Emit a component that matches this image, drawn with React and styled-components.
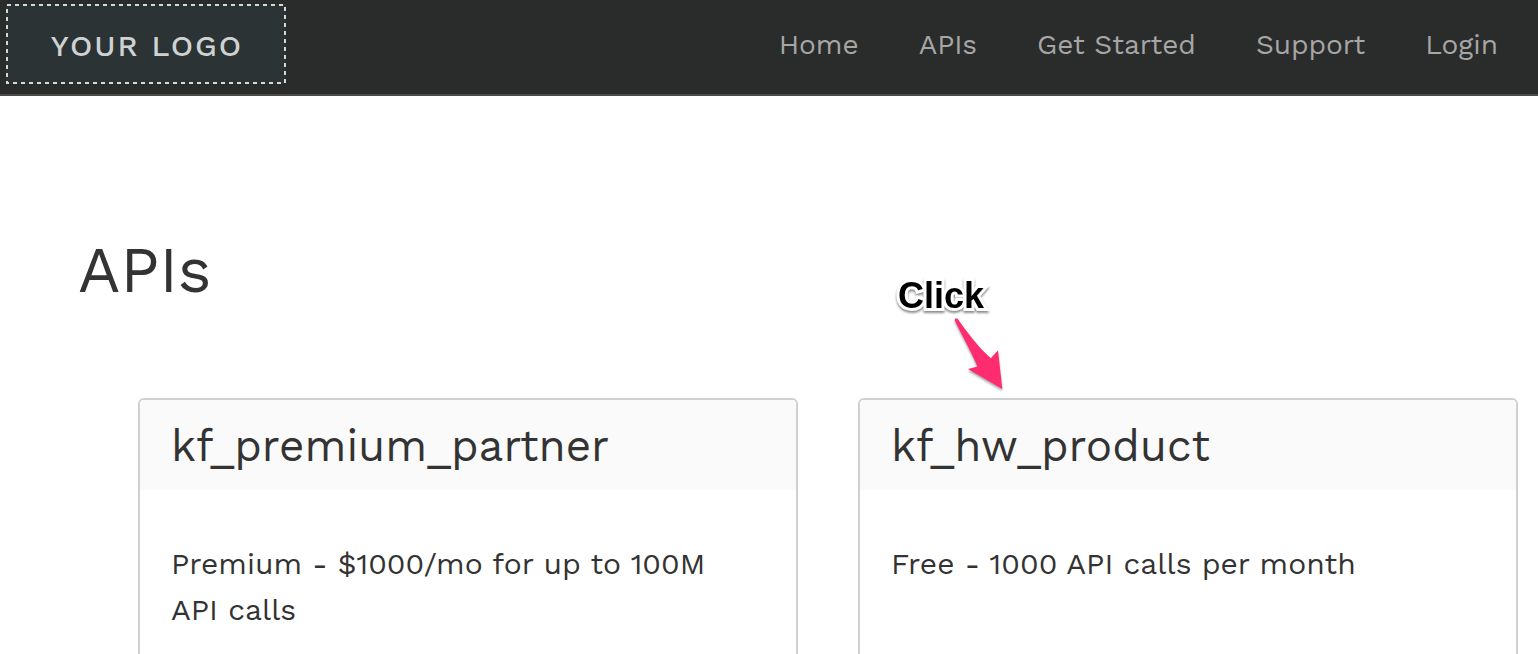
import React from "react";
import styled, { createGlobalStyle } from "styled-components";

const GlobalStyle = createGlobalStyle`
  *, *::before, *::after { box-sizing: border-box; }
  body {
    margin: 0;
    background: #fff;
    color: #333;
    font-family: "Work Sans", Inter, sans-serif;
    font-weight: 400;
    font-variant-numeric: lining-nums;
  }
  html { scrollbar-width: none; }
`;

const Header = styled.header`
  display: flex;
  justify-content: space-between;
  align-items: flex-start;
  padding: 4px 10px 10px 6px;
  background: #2a2c2b;
  border-bottom: 2px solid #4a4848;
`;

const Logo = styled.a`
  position: relative;
  display: flex;
  align-items: center;
  justify-content: center;
  width: 280px;
  height: 80px;
  flex: none;
  background: #2b3335;
  color: #cfd2d2;
  font-size: 30px;
  font-weight: 500;
  line-height: 32px;
  letter-spacing: 2px;
  padding-top: 4px;
  padding-left: 2px;
  text-decoration: none;
`;

const LogoFrame = styled.svg`
  position: absolute;
  inset: 0;
  width: 100%;
  height: 100%;
`;

const Nav = styled.nav`
  display: flex;
`;

const NavLink = styled.a`
  padding: 25px 30px 23px;
  color: #a6a6a6;
  font-size: 28px;
  line-height: 32px;
  text-decoration: none;
  white-space: nowrap;
`;

const Main = styled.main`
  padding: 136px 20px 0 78px;
`;

const PageTitle = styled.h1`
  margin: 0;
  font-size: 64px;
  line-height: 76px;
  font-weight: 400;
`;

const CardGrid = styled.section`
  display: grid;
  grid-template-columns: 1fr 1fr;
  gap: 60px;
  padding: 90px 0 0 60px;
`;

const Card = styled.article`
  position: relative;
  min-height: 256px;
  border: 2px solid #d0d0d0;
  border-bottom: 0;
  border-radius: 6px 6px 0 0;
`;

const CardTitle = styled.h2`
  margin: 0;
  padding: 20px 31px 18px;
  background: #fafafa;
  border-radius: 4px 4px 0 0;
  font-size: 44px;
  line-height: 52px;
  font-weight: 400;
`;

const CardText = styled.p`
  margin: 0;
  padding: 51px 60px 18px 31px;
  font-size: 30px;
  line-height: 46px;
`;

const Callout = styled.div`
  position: absolute;
  left: 38px;
  bottom: 100%;
  display: flex;
  flex-direction: column;
`;

const CalloutLabel = styled.span`
  color: #000;
  font-family: "Liberation Sans", Arial, sans-serif;
  font-size: 36px;
  font-weight: 700;
  line-height: 36px;
  paint-order: stroke fill;
  -webkit-text-stroke: 6px #fff;
  filter: drop-shadow(0 2px 1px rgba(0, 0, 0, 0.45));
`;

const CalloutArrow = styled.svg`
  display: block;
  margin: 0 0 10px 52px;
  overflow: visible;
  filter: drop-shadow(0 2px 1px rgba(0, 0, 0, 0.35));
`;

const links = ["Home", "APIs", "Get Started", "Support", "Login"];

const products = [
  {
    name: "kf_premium_partner",
    text: "Premium - $1000/mo for up to 100M API calls",
  },
  {
    name: "kf_hw_product",
    text: "Free - 1000 API calls per month",
    callout: "Click",
  },
];

export default function App() {
  return (
    <>
      <GlobalStyle />
      <Header>
        <Logo href="#">
          <LogoFrame aria-hidden="true">
            <rect
              x="1"
              y="1"
              width="278"
              height="78"
              fill="none"
              stroke="#d5d9d9"
              strokeWidth="2"
              strokeDasharray="4 4"
            />
          </LogoFrame>
          YOUR LOGO
        </Logo>
        <Nav aria-label="Main">
          {links.map((label) => (
            <NavLink key={label} href="#">
              {label}
            </NavLink>
          ))}
        </Nav>
      </Header>
      <Main>
        <PageTitle>APIs</PageTitle>
        <CardGrid>
          {products.map((product) => (
            <Card key={product.name}>
              {product.callout && (
                <Callout>
                  <CalloutLabel>{product.callout}</CalloutLabel>
                  <CalloutArrow width="54" height="76" viewBox="0 0 54 76" aria-hidden="true">
                    <path
                      d="M7.6 4.8C6.4 3.6 4.4 4.6 4.8 6.4C12 22 21 37 27.5 52.5L18 55L52.3 75L48 36.2L40.8 44.3C28 33 17 18 7.6 4.8Z"
                      fill="#ff2d70"
                    />
                  </CalloutArrow>
                </Callout>
              )}
              <CardTitle>{product.name}</CardTitle>
              <CardText>{product.text}</CardText>
            </Card>
          ))}
        </CardGrid>
      </Main>
    </>
  );
}
